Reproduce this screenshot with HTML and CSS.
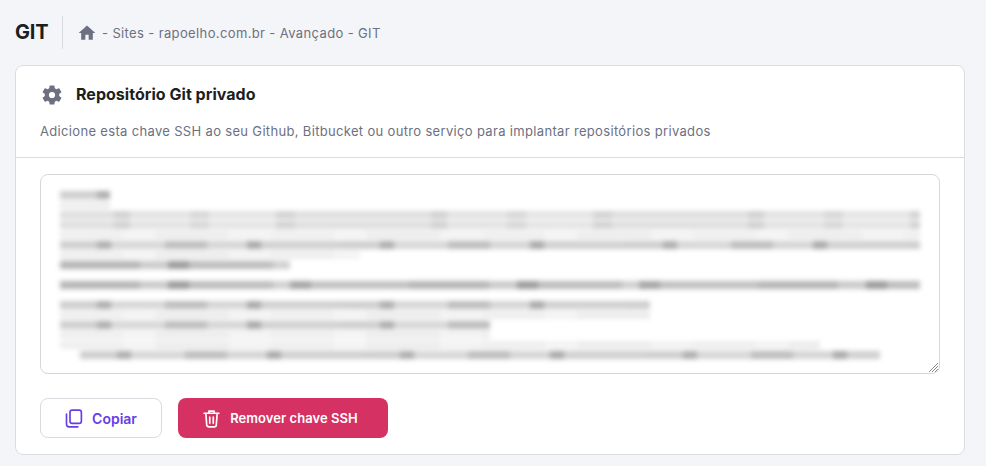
FILE: index.html
```html
<!DOCTYPE html>
<html lang="pt-BR">
<head>
    <meta charset="UTF-8">
    <title>GIT</title>
    <link rel="stylesheet" href="styles.css">
</head>
<body>
    <div class="page-header">
        <h1 class="page-title">GIT</h1>
        <div class="breadcrumbs">
            <svg class="home-icon" viewBox="0 0 24 24"><path d="M10 20v-6h4v6h5v-8h3L12 3 2 12h3v8z"/></svg>
            <span>- Sites - rapoelho.com.br - Avançado - GIT</span>
        </div>
    </div>

    <div class="card">
        <div class="card-head">
            <div class="card-title">
                <svg class="gear-icon" viewBox="0 0 24 24"><path d="M19.14 12.94c.04-.3.06-.61.06-.94s-.02-.64-.07-.94l2.03-1.58a.49.49 0 0 0 .12-.61l-1.92-3.32a.49.49 0 0 0-.59-.22l-2.39.96a7 7 0 0 0-1.62-.94l-.36-2.54a.48.48 0 0 0-.48-.41h-3.84a.47.47 0 0 0-.47.41l-.36 2.54c-.59.24-1.13.57-1.62.94l-2.39-.96a.48.48 0 0 0-.59.22L2.74 8.87a.47.47 0 0 0 .12.61l2.03 1.58c-.05.3-.09.63-.09.94s.02.64.07.94l-2.03 1.58a.49.49 0 0 0-.12.61l1.92 3.32c.12.22.37.29.59.22l2.39-.96c.5.38 1.03.7 1.62.94l.36 2.54c.05.24.24.41.48.41h3.84c.24 0 .44-.17.47-.41l.36-2.54c.59-.24 1.13-.56 1.62-.94l2.39.96c.22.08.47 0 .59-.22l1.92-3.32a.47.47 0 0 0-.12-.61zM12 15.1a3.1 3.1 0 1 1 0-6.2 3.1 3.1 0 0 1 0 6.2z"/></svg>
                <h2>Repositório Git privado</h2>
            </div>
            <p class="card-desc">Adicione esta chave SSH ao seu Github, Bitbucket ou outro serviço para implantar repositórios privados</p>
        </div>

        <div class="card-body">
            <div class="key-box">
                <div class="key-lines">
                    <div class="key-line tone-mid" style="width: 50px"></div>
                    <div class="key-line tone-faint" style="width: 50px"></div>
                    <div class="key-line tone-light" style="width: 860px"></div>
                    <div class="key-line tone-light" style="width: 860px"></div>
                    <div class="key-line tone-faint" style="width: 860px"></div>
                    <div class="key-line tone-mid" style="width: 860px"></div>
                    <div class="key-line tone-faint" style="width: 300px"></div>
                    <div class="key-line tone-dark" style="width: 230px"></div>
                    <div class="key-line tone-none"></div>
                    <div class="key-line tone-dark" style="width: 860px"></div>
                    <div class="key-line tone-none"></div>
                    <div class="key-line tone-mid" style="width: 590px"></div>
                    <div class="key-line tone-faint" style="width: 590px"></div>
                    <div class="key-line tone-mid" style="width: 430px"></div>
                    <div class="key-line tone-faint" style="width: 430px"></div>
                    <div class="key-line tone-faint" style="width: 760px"></div>
                    <div class="key-line tone-mid indent" style="width: 800px"></div>
                </div>
                <svg class="resize-grip" viewBox="0 0 10 10"><path d="M10 1 1 10M10 4 4 10M10 7 7 10"/></svg>
            </div>

            <div class="actions">
                <button class="btn btn-copy">
                    <svg viewBox="0 0 24 24"><rect x="8" y="2.5" width="13" height="15" rx="2.5"/><path d="M4 7v11.5A3 3 0 0 0 7 21.5h10"/></svg>
                    Copiar
                </button>
                <button class="btn btn-remove">
                    <svg viewBox="0 0 24 24"><path d="M3.5 6h17M9 6V3.5h6V6M5.5 6l1 13a2.5 2.5 0 0 0 2.5 2.5h6a2.5 2.5 0 0 0 2.5-2.5l1-13M10 10.5v7M14 10.5v7"/></svg>
                    Remover chave SSH
                </button>
            </div>
        </div>
    </div>
</body>
</html>
```

FILE: styles.css
```css
html, body {
    height: 466px;
    overflow: hidden;
}

body {
    font-family: Inter, "Noto Sans", sans-serif;
    margin: 0;
    padding: 16px 21px 0 15px;
    box-sizing: border-box;
    background-color: #f4f5f8;
    color: #1d1e20;
}

.page-header {
    display: flex;
    align-items: center;
    height: 33px;
    margin-bottom: 16px;
}

.page-title {
    margin: 0;
    width: 47px;
    font-size: 20px;
    line-height: 33px;
    font-weight: 700;
    letter-spacing: -0.2px;
    border-right: 1px solid #d8dae0;
}

.breadcrumbs {
    display: flex;
    align-items: center;
    gap: 5px;
    margin-left: 14px;
    font-size: 13px;
    color: #6d7081;
    letter-spacing: 0.37px;
}

.home-icon {
    width: 20px;
    height: 20px;
    fill: #6d7081;
}

.card {
    height: 390px;
    box-sizing: border-box;
    background-color: #fff;
    border: 1px solid #dadce0;
    border-radius: 8px;
}

.card-head {
    height: 92px;
    box-sizing: border-box;
    padding: 14px 24px 0;
    border-bottom: 1px solid #dadce0;
}

.card-title {
    display: flex;
    align-items: center;
    gap: 12px;
    height: 29px;
}

.card-title h2 {
    margin: 0 0 2px;
    font-size: 16px;
    font-weight: 700;
    letter-spacing: 0.03px;
}

.gear-icon {
    width: 24px;
    height: 24px;
    fill: #6d7081;
}

.card-desc {
    margin: 13px 0 0;
    font-size: 13px;
    line-height: 18px;
    color: #6d7081;
    letter-spacing: 0.33px;
}

.card-body {
    padding: 16px 24px;
}

.key-box {
    position: relative;
    height: 200px;
    box-sizing: border-box;
    border: 1px solid #d5d7db;
    border-radius: 8px;
    padding: 15px 0 0 19px;
    overflow: hidden;
}

.key-lines {
    display: flex;
    flex-direction: column;
    filter: blur(2.6px);
}

.key-line {
    height: 10px;
    flex-shrink: 0;
    background-repeat: repeat-x;
    background-position: left center;
}

.tone-none {
    background: none;
}

.tone-faint {
    background-image: linear-gradient(90deg, #eee 0 30%, #f3f3f3 30% 45%, #ececec 45% 80%, #f2f2f2 80% 100%);
    background-size: 211px 8px;
}

.tone-light {
    background-image: linear-gradient(90deg, #dedede 0 17%, #d0d0d0 17% 22%, #e2e2e2 22% 41%, #d6d6d6 41% 47%, #e4e4e4 47% 68%, #d2d2d2 68% 74%, #dedede 74% 100%);
    background-size: 317px 8px;
}

.tone-mid {
    background-image: linear-gradient(90deg, #cdcdcd 0 13%, #adadad 13% 18%, #d6d6d6 18% 37%, #bcbcbc 37% 52%, #d4d4d4 52% 66%, #a8a8a8 66% 71%, #cfcfcf 71% 100%);
    background-size: 283px 8px;
}

.tone-dark {
    background-image: linear-gradient(90deg, #b4b4b4 0 23%, #cacaca 23% 31%, #9a9a9a 31% 37%, #bcbcbc 37% 61%, #d0d0d0 61% 66%, #a4a4a4 66% 72%, #c0c0c0 72% 100%);
    background-size: 349px 8px;
}

.indent {
    margin-left: 20px;
}

.resize-grip {
    position: absolute;
    right: 1px;
    bottom: 1px;
    width: 10px;
    height: 10px;
    fill: none;
    stroke: #8a8a8a;
    stroke-width: 1;
}

.actions {
    display: flex;
    gap: 16px;
    margin-top: 24px;
}

.btn {
    display: flex;
    align-items: center;
    justify-content: center;
    gap: 8px;
    height: 40px;
    box-sizing: border-box;
    border-radius: 8px;
    font-family: inherit;
    font-size: 13px;
    font-weight: 600;
    cursor: pointer;
}

.btn svg {
    width: 21px;
    height: 21px;
    fill: none;
    stroke: currentColor;
    stroke-width: 1.9;
    stroke-linecap: round;
    stroke-linejoin: round;
}

.btn-copy {
    width: 122px;
    padding: 0 8px 0 6px;
    background-color: #fff;
    border: 1px solid #d8dae0;
    color: #673de6;
    font-size: 14px;
}

.btn-remove {
    width: 210px;
    padding: 0 13px 0 6px;
    background-color: #d63163;
    border: none;
    color: #fff;
    letter-spacing: 0.05px;
}
```
